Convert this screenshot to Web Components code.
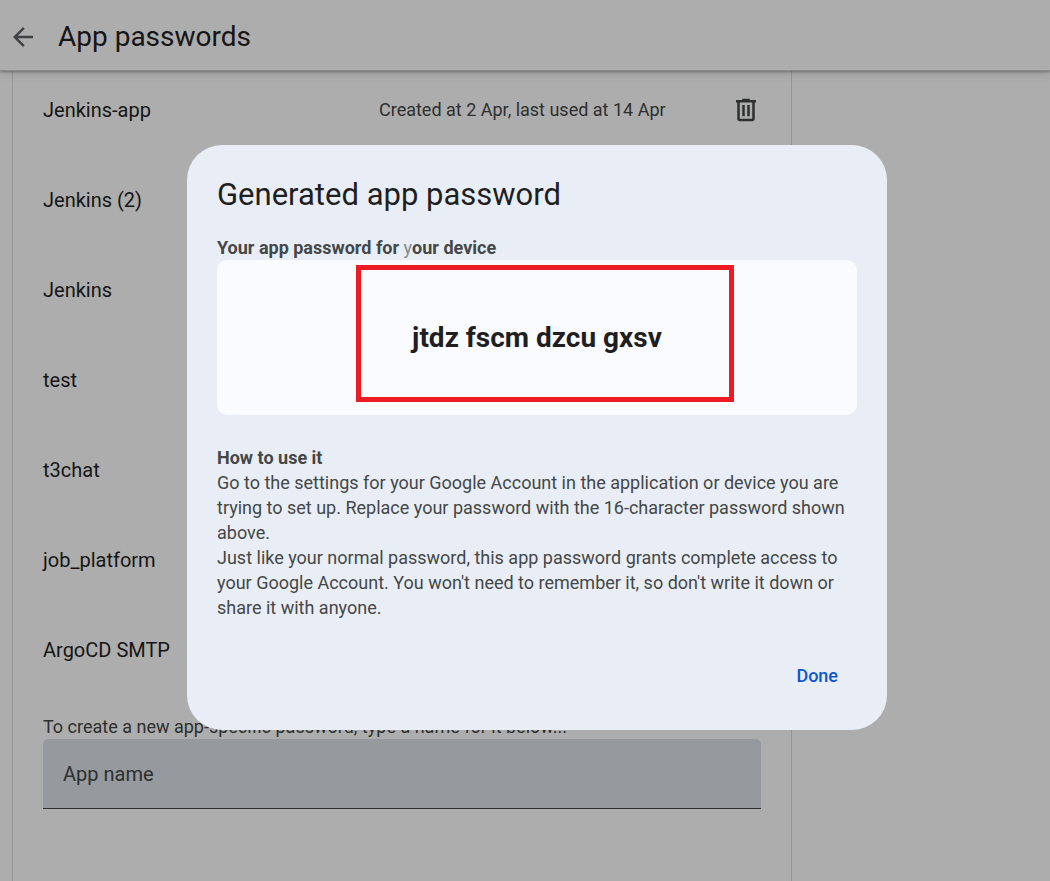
<!DOCTYPE html>
<html lang="en">
<head>
<meta charset="utf-8">
<meta name="viewport" content="width=device-width, initial-scale=1">
<title>App passwords</title>
<style>
  html, body { margin: 0; }
  body {
    font-family: Roboto, "Noto Sans", sans-serif;
    color: #1f1f1f;
    background: #fff;
  }
</style>
</head>
<body>
<app-passwords-page></app-passwords-page>

<script>
class TopBar extends HTMLElement {
  constructor() {
    super();
    this.attachShadow({ mode: 'open' }).innerHTML = `
      <style>
        :host { display: block; position: relative; z-index: 1; }
        header {
          display: flex; align-items: center; gap: 20px;
          box-sizing: border-box; height: 71px; padding: 3px 8px 0;
          background: #fff;
          border-bottom: 1px solid #cdd0ce;
          box-shadow: 0 1px 2px rgba(60,64,67,.4), 0 3px 8px rgba(60,64,67,.16);
        }
        button { display: flex; padding: 0; border: 0; background: none; color: #5f6368; cursor: pointer; }
        svg { width: 30px; height: 30px; fill: currentColor; }
        h1 { margin: 0; font-size: 28px; line-height: 40px; font-weight: 400; }
      </style>
      <header>
        <button type="button" aria-label="Back">
          <svg viewBox="0 0 24 24" aria-hidden="true"><path d="M20 11H7.83l5.59-5.59L12 4l-8 8 8 8 1.41-1.41L7.83 13H20v-2z"/></svg>
        </button>
        <h1><slot></slot></h1>
      </header>`;
  }
}
customElements.define('top-bar', TopBar);

class PasswordEntry extends HTMLElement {
  constructor() {
    super();
    this.attachShadow({ mode: 'open' }).innerHTML = `
      <style>
        :host { display: grid; grid-template-columns: 336px 1fr 30px; align-items: center; height: 30px; }
        .name { font-size: 20px; line-height: 30px; }
        .used { font-size: 18px; line-height: 30px; color: #444746; }
        button { display: flex; padding: 0; border: 0; background: none; color: #444746; cursor: pointer; }
        svg { width: 30px; height: 30px; fill: currentColor; }
      </style>
      <span class="name"><slot></slot></span>
      <span class="used"><slot name="used"></slot></span>
      <button type="button" aria-label="Remove app password">
        <svg viewBox="0 -960 960 960" aria-hidden="true"><path d="M280-120q-33 0-56.5-23.5T200-200v-520h-40v-80h200v-40h240v40h200v80h-40v520q0 33-23.5 56.5T680-120H280Zm400-600H280v520h400v-520ZM360-280h80v-360h-80v360Zm160 0h80v-360h-80v360Z"/></svg>
      </button>`;
  }
  connectedCallback() { this.setAttribute('role', 'listitem'); }
}
customElements.define('password-entry', PasswordEntry);

class NameField extends HTMLElement {
  constructor() {
    super();
    this.attachShadow({ mode: 'open' }).innerHTML = `
      <style>
        :host { display: block; }
        label { display: block; font-size: 18px; line-height: 24px; color: #444746; }
        input {
          display: block; box-sizing: border-box; width: 100%; height: 70px; padding: 0 20px;
          border: 0; border-bottom: 1px solid #444746; border-radius: 5px 5px 0 0;
          background: #dde3ea; color: #1f1f1f; font: inherit; font-size: 20px; outline: none;
        }
        input::placeholder { color: #444746; opacity: 1; }
      </style>
      <label for="name"><slot></slot></label>
      <input id="name" type="text" placeholder="App name">`;
  }
}
customElements.define('name-field', NameField);

class SecretPanel extends HTMLElement {
  constructor() {
    super();
    this.attachShadow({ mode: 'open' }).innerHTML = `
      <style>
        :host {
          display: flex; align-items: center; justify-content: center; position: relative;
          min-height: 155px; border-radius: 10px; background: #f9fbff;
          font-size: 28px; line-height: 40px; font-weight: 700;
        }
        .marker { position: absolute; inset: 5px 123px 13px 139px; border: 5px solid #ed1c24; }
      </style>
      <slot></slot>
      <div class="marker"></div>`;
  }
}
customElements.define('secret-panel', SecretPanel);

class PasswordDialog extends HTMLElement {
  constructor() {
    super();
    this.attachShadow({ mode: 'open' }).innerHTML = `
      <style>
        :host {
          display: flex; align-items: center; justify-content: center;
          position: fixed; inset: 0; z-index: 2; box-sizing: border-box;
          padding: 0 0 6px 24px; background: rgba(0,0,0,.32);
        }
        section {
          box-sizing: border-box; width: 700px; max-width: 100%; padding: 30px;
          border-radius: 35px; background: #e9eef6;
        }
        h2 { margin: 0 0 20px; font-size: 31px; line-height: 40px; font-weight: 400; }
        h3 { margin: 0; font-size: 18px; line-height: 25px; font-weight: 700; color: #444746; }
        .y { font-weight: 400; color: #85888a; }
        secret-panel { margin-bottom: 30px; }
        p { margin: 0; font-size: 18px; line-height: 25px; color: #444746; }
        footer { display: flex; justify-content: flex-end; margin-top: 30px; }
        button {
          height: 50px; padding: 0 19px; border: 0; background: none;
          font: inherit; font-size: 18px; font-weight: 500; color: #0b57d0; cursor: pointer;
        }
      </style>
      <section role="dialog" aria-modal="true" aria-labelledby="title">
        <h2 id="title">Generated app password</h2>
        <h3>Your app password for <span class="y">y</span>our device</h3>
        <secret-panel><slot></slot></secret-panel>
        <h3>How to use it</h3>
        <p>Go to the settings for your Google Account in the application or device you are trying to set up. Replace your password with the 16-character password shown above.</p>
        <p>Just like your normal password, this app password grants complete access to your Google Account. You won't need to remember it, so don't write it down or share it with anyone.</p>
        <footer><button type="button">Done</button></footer>
      </section>`;
  }
}
customElements.define('password-dialog', PasswordDialog);

class AppPasswordsPage extends HTMLElement {
  constructor() {
    super();
    this.attachShadow({ mode: 'open' }).innerHTML = `
      <style>
        :host { display: flex; flex-direction: column; min-height: 100vh; }
        main {
          flex: 1; box-sizing: border-box; width: 780px; max-width: calc(100% - 24px);
          margin-left: 12px; padding: 24px 30px;
          border: solid #dadce0; border-width: 0 1px;
        }
        .list { display: grid; gap: 60px; margin-bottom: 50px; }
      </style>
      <top-bar>App passwords</top-bar>
      <main>
        <div class="list" role="list">
          <password-entry>Jenkins-app<span slot="used">Created at 2 Apr, last used at 14 Apr</span></password-entry>
          <password-entry>Jenkins (2)</password-entry>
          <password-entry>Jenkins</password-entry>
          <password-entry>test</password-entry>
          <password-entry>t3chat</password-entry>
          <password-entry>job_platform</password-entry>
          <password-entry>ArgoCD SMTP</password-entry>
        </div>
        <name-field>To create a new app-specific password, type a name for it below...</name-field>
      </main>
      <password-dialog>jtdz fscm dzcu gxsv</password-dialog>`;
  }
}
customElements.define('app-passwords-page', AppPasswordsPage);
</script>
</body>
</html>
